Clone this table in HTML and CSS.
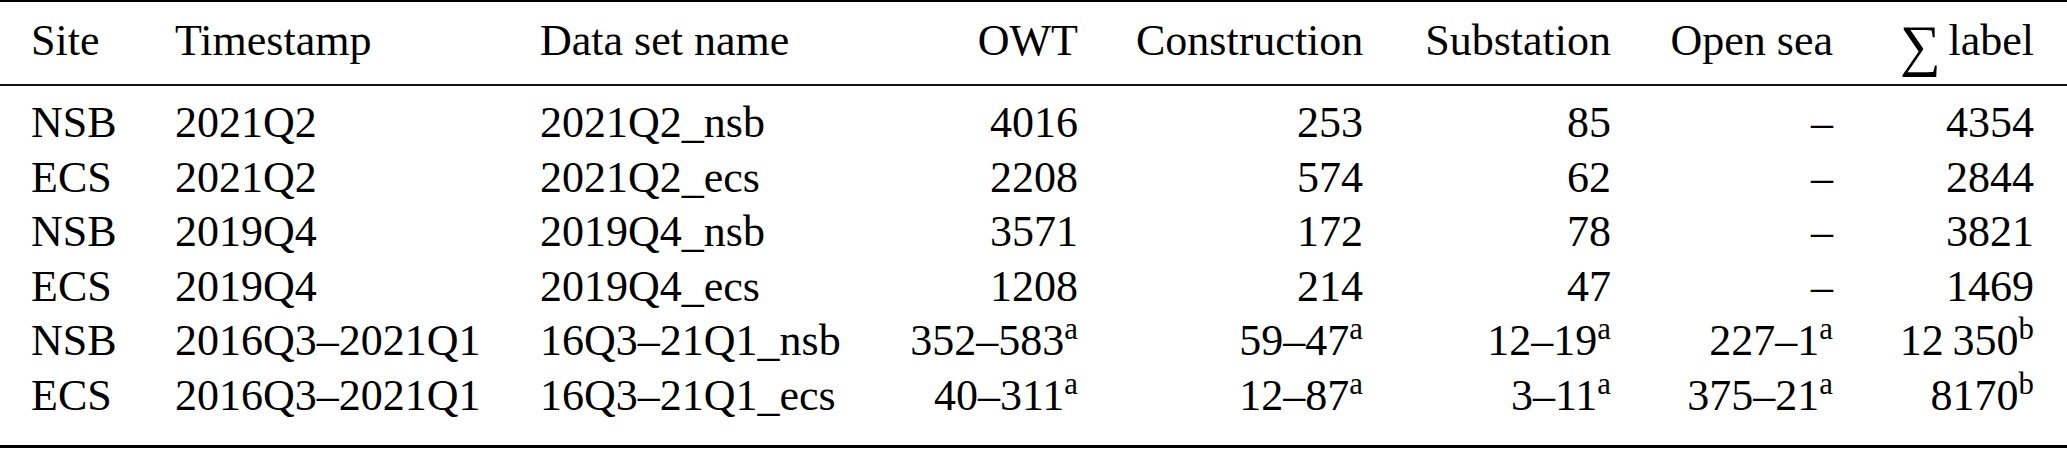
FILE: index.html
```html
<!DOCTYPE html>
<html lang="en">
<head>
<meta charset="utf-8">
<title>Data sets</title>
<link rel="stylesheet" href="styles.css">
</head>
<body>
<table class="tbl">
  <colgroup>
    <col class="c1"><col class="c2"><col class="c3"><col class="c4">
    <col class="c5"><col class="c6"><col class="c7"><col class="c8">
  </colgroup>
  <thead>
    <tr>
      <th class="l">Site</th>
      <th class="l">Timestamp</th>
      <th class="l">Data set name</th>
      <th class="r">OWT</th>
      <th class="r">Construction</th>
      <th class="r">Substation</th>
      <th class="r">Open sea</th>
      <th class="r"><span class="sum">∑</span>label</th>
    </tr>
  </thead>
  <tbody>
    <tr class="first">
      <td class="l">NSB</td><td class="l">2021Q2</td><td class="l">2021Q2_nsb</td>
      <td class="r">4016</td><td class="r">253</td><td class="r">85</td><td class="r">–</td><td class="r">4354</td>
    </tr>
    <tr>
      <td class="l">ECS</td><td class="l">2021Q2</td><td class="l">2021Q2_ecs</td>
      <td class="r">2208</td><td class="r">574</td><td class="r">62</td><td class="r">–</td><td class="r">2844</td>
    </tr>
    <tr>
      <td class="l">NSB</td><td class="l">2019Q4</td><td class="l">2019Q4_nsb</td>
      <td class="r">3571</td><td class="r">172</td><td class="r">78</td><td class="r">–</td><td class="r">3821</td>
    </tr>
    <tr>
      <td class="l">ECS</td><td class="l">2019Q4</td><td class="l">2019Q4_ecs</td>
      <td class="r">1208</td><td class="r">214</td><td class="r">47</td><td class="r">–</td><td class="r">1469</td>
    </tr>
    <tr>
      <td class="l">NSB</td><td class="l">2016Q3–2021Q1</td><td class="l">16Q3–21Q1_nsb</td>
      <td class="r">352–583<sup class="fn">a</sup></td><td class="r">59–47<sup class="fn">a</sup></td>
      <td class="r">12–19<sup class="fn">a</sup></td><td class="r">227–1<sup class="fn">a</sup></td>
      <td class="r">12&thinsp;350<sup class="fn">b</sup></td>
    </tr>
    <tr class="last">
      <td class="l">ECS</td><td class="l">2016Q3–2021Q1</td><td class="l">16Q3–21Q1_ecs</td>
      <td class="r">40–311<sup class="fn">a</sup></td><td class="r">12–87<sup class="fn">a</sup></td>
      <td class="r">3–11<sup class="fn">a</sup></td><td class="r">375–21<sup class="fn">a</sup></td>
      <td class="r">8170<sup class="fn">b</sup></td>
    </tr>
  </tbody>
</table>
</body>
</html>
```

FILE: styles.css
```css
html, body {
  margin: 0;
  padding: 0;
  background: #ffffff;
}

.tbl {
  width: 2067px;
  table-layout: fixed;
  border-collapse: separate;
  border-spacing: 0;
  font-family: "Liberation Serif", "Times New Roman", serif;
  font-size: 44px;
  color: #000000;
}

.c1 { width: 146px; }
.c2 { width: 365px; }
.c3 { width: 365px; }
.c4 { width: 231px; }
.c5 { width: 285px; }
.c6 { width: 248px; }
.c7 { width: 222px; }
.c8 { width: 205px; }

.tbl th,
.tbl td {
  padding: 0 29px;
  font-weight: normal;
  white-space: nowrap;
  line-height: 54.6px;
}

.tbl th:first-child,
.tbl td:first-child { padding-left: 31px; }

.tbl th:last-child,
.tbl td:last-child { padding-right: 33px; }

.l { text-align: left; }
.r { text-align: right; }

.tbl th {
  border-top: 2px solid #000;
  border-bottom: 2px solid #111;
  padding-top: 11px;
  padding-bottom: 16px;
  line-height: 55px;
}

.tbl tr.first td { padding-top: 10px; }

.tbl tr.last td {
  padding-bottom: 21px;
  border-bottom: 3px solid #000;
}

.sum {
  display: inline-block;
  font-size: 1.3em;
  line-height: 0;
  vertical-align: -0.18em;
  margin-right: 8px;
}

.fn {
  font-size: 0.7em;
  line-height: 0;
  vertical-align: 16px;
}
```
